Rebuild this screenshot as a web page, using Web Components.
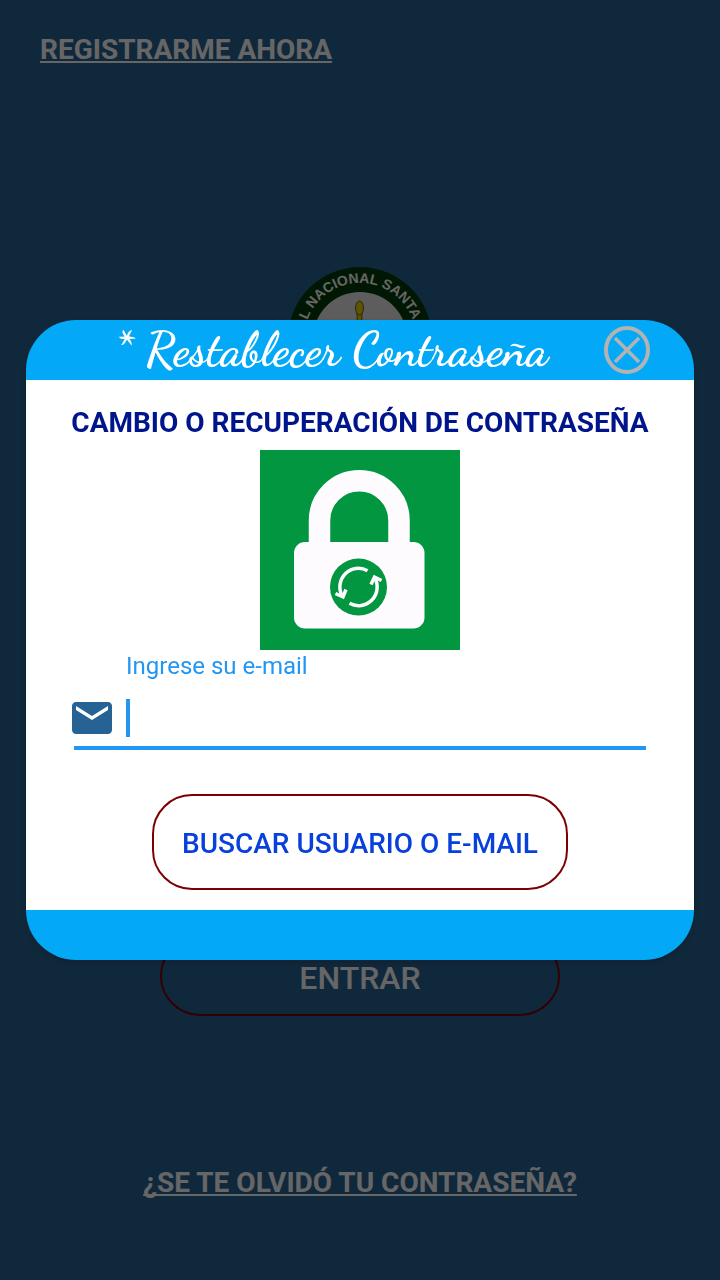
<!DOCTYPE html>
<html lang="es">
<head>
<meta charset="utf-8">
<meta name="viewport" content="width=device-width, initial-scale=1">
<title>Restablecer Contraseña</title>
<style>
  body { margin: 0; font-family: Roboto, "Liberation Sans", sans-serif; background: #2a6496; }
</style>
</head>
<body>
<login-screen></login-screen>
<modal-overlay>
  <reset-dialog heading="* Restablecer Contraseña">
    <reset-form></reset-form>
  </reset-dialog>
</modal-overlay>

<script>
const define = (name, html, setup) => customElements.define(name, class extends HTMLElement {
  connectedCallback() {
    if (this.shadowRoot) return;
    const t = document.createElement('template');
    t.innerHTML = html;
    this.attachShadow({ mode: 'open' }).append(t.content.cloneNode(true));
    if (setup) setup(this, this.shadowRoot);
  }
});

define('text-link', `
  <style>
    :host { display: block; }
    a { color: #fff; font-size: 28px; font-weight: 700; line-height: 34px; text-decoration: underline; text-decoration-skip-ink: none; }
  </style>
  <a href="#"><slot></slot></a>`);

define('pill-button', `
  <style>
    :host { display: block; }
    button {
      box-sizing: border-box; width: 100%; height: var(--pill-height, 96px); padding: 3px 28px 0;
      border: 2px solid #7b0000; border-radius: 40px; background: transparent;
      color: var(--pill-color, #0840dc); font: 500 var(--pill-size, 28px)/34px Roboto, "Liberation Sans", sans-serif;
      white-space: nowrap;
    }
  </style>
  <button type="button"><slot></slot></button>`);

define('hospital-seal', `
  <style>:host { display: block; width: 146px; } svg { display: block; }</style>
  <svg width="146" height="146" viewBox="0 0 146 146" aria-hidden="true">
    <circle cx="73" cy="73" r="72" fill="#003c08"/>
    <circle cx="73" cy="73" r="47" fill="#e8e8e8"/>
    <path id="arc" d="M17 73a56 56 0 0 1 112 0" fill="none"/>
    <text font-family="Liberation Sans, sans-serif" font-size="14" font-weight="700" fill="#fff" text-anchor="middle"><textPath href="#arc" startOffset="50%">L NACIONAL SANTA</textPath></text>
    <path d="M70 46h5l-1 50h-3z" fill="#e6d200" stroke="#6e6400"/>
    <ellipse cx="72.500" cy="42" rx="4" ry="7" fill="#e6d200" stroke="#6e6400"/>
  </svg>`);

define('login-screen', `
  <style>
    :host { display: flex; flex-direction: column; box-sizing: border-box; min-height: 100vh; padding: 33px 40px 80px; }
    hospital-seal { align-self: center; margin-top: 199px; }
    .actions { display: flex; flex-direction: column; align-items: center; gap: 150px; margin-top: auto; }
    pill-button { width: 400px; --pill-height: 80px; --pill-size: 32px; --pill-color: #fff; }
  </style>
  <text-link>REGISTRARME AHORA</text-link>
  <hospital-seal></hospital-seal>
  <div class="actions">
    <pill-button>ENTRAR</pill-button>
    <text-link>¿SE TE OLVIDÓ TU CONTRASEÑA?</text-link>
  </div>`);

define('modal-overlay', `
  <style>
    :host { position: fixed; inset: 0; display: flex; align-items: center; padding: 0 26px; background: rgba(0, 0, 0, .6); }
    ::slotted(*) { flex: 1; }
  </style>
  <slot></slot>`);

define('close-button', `
  <style>
    :host { display: block; }
    button { display: block; width: 48px; height: 48px; padding: 0; border: 0; background: none; }
    svg { display: block; }
  </style>
  <button type="button" aria-label="Cerrar">
    <svg width="48" height="48" viewBox="0 0 48 48" fill="none" stroke="#b3b3b3">
      <ellipse cx="24" cy="24" rx="21" ry="22" stroke-width="4"/>
      <path d="M12 12l24 24M36 12L12 36" stroke-width="3.500"/>
    </svg>
  </button>`);

define('reset-dialog', `
  <style>
    :host { display: block; overflow: hidden; border-radius: 50px; background: #03a9f7; box-shadow: 0 2px 6px rgba(0, 0, 0, .2); }
    header { display: flex; align-items: center; height: 60px; padding: 0 43px 0 32px; }
    h1 { flex: 1; margin: 0; color: #fff; font: 700 48px/64px "Dancing Script", "Liberation Serif", cursive; text-align: center; white-space: nowrap; }
    footer { height: 50px; }
  </style>
  <header><h1></h1><close-button></close-button></header>
  <slot></slot>
  <footer></footer>`, (host, root) => {
    host.setAttribute('role', 'dialog');
    root.querySelector('h1').textContent = host.getAttribute('heading');
  });

define('lock-picture', `
  <style>:host { display: block; } svg { display: block; }</style>
  <svg width="200" height="200" viewBox="0 0 200 200" role="img" aria-label="Candado">
    <path d="M0 0h200v200H0z" fill="#029640"/>
    <path d="M59.500 93V70.500a39.750 39.750 0 0 1 79.500 0v22.500" fill="none" stroke="#fdfbfd" stroke-width="21.500"/>
    <rect x="34" y="92" width="130.500" height="86.500" rx="11" fill="#fdfbfd"/>
    <circle cx="98.500" cy="137" r="28.500" fill="#029640"/>
    <g fill="none" stroke="#fdfbfd" stroke-width="3.500">
      <path d="M107.500 120.700A18.600 18.600 0 0 0 82.500 146.500"/>
      <path d="M75.500 143.500l7.500 3.500 3-7.500"/>
      <path d="M89.500 153.300A18.600 18.600 0 0 0 114.500 127.500"/>
      <path d="M121.500 130.500l-7-3.500-3.500 7.500"/>
    </g>
  </svg>`);

define('email-field', `
  <style>
    :host { display: block; }
    label { display: block; margin-left: 54px; color: #2196f3; font-size: 24px; line-height: 32px; }
    .row { display: flex; align-items: center; height: 56px; margin-top: 8px; }
    svg { display: block; margin-right: 14px; }
    .caret { width: 4px; height: 38px; background: #2196f3; }
    input { flex: 1; min-width: 0; height: 40px; padding: 0; border: 0; outline: 0; background: none; color: #222; font: 32px/40px Roboto, "Liberation Sans", sans-serif; }
    .line { height: 4px; margin: 0 2px; background: #2196f3; }
  </style>
  <label for="email">Ingrese su e-mail</label>
  <div class="row">
    <svg width="40" height="32" viewBox="2 4 20 16" aria-hidden="true"><path fill="#266294" d="M20 4H4c-1.100 0-2 .9-2 2v12c0 1.100.9 2 2 2h16c1.100 0 2-.9 2-2V6c0-1.100-.9-2-2-2zm0 4l-8 5-8-5V6l8 5 8-5v2z"/></svg>
    <span class="caret"></span>
    <input id="email" type="email">
  </div>
  <div class="line"></div>`);

define('reset-form', `
  <style>
    :host { display: flex; flex-direction: column; align-items: center; padding: 26px 46px 20px; background: #fff; }
    h2 { margin: 0 0 10px; color: #00148c; font-size: 28px; font-weight: 700; line-height: 34px; white-space: nowrap; }
    email-field { align-self: stretch; }
    pill-button { margin-top: 44px; }
  </style>
  <h2>CAMBIO O RECUPERACIÓN DE CONTRASEÑA</h2>
  <lock-picture></lock-picture>
  <email-field></email-field>
  <pill-button>BUSCAR USUARIO O E-MAIL</pill-button>`);
</script>
</body>
</html>
